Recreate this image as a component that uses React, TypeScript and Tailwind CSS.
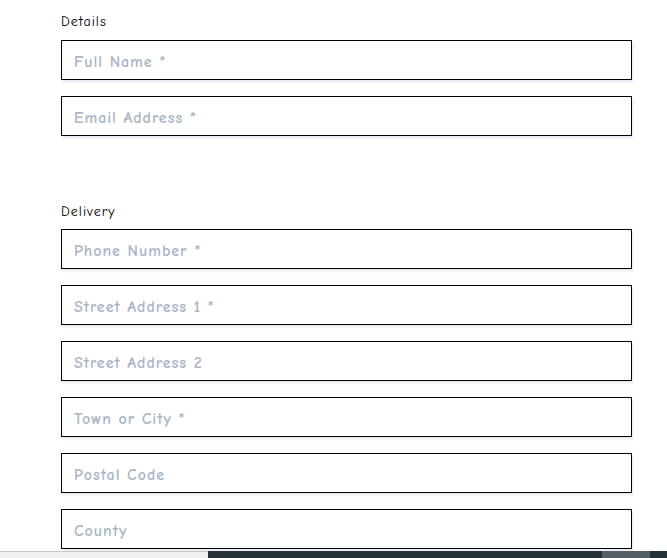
import React from "react";

const details = ["Full Name *", "Email Address *"];
const delivery = [
  "Phone Number *",
  "Street Address 1 *",
  "Street Address 2",
  "Town or City *",
  "Postal Code",
  "County",
];

const Field = ({ placeholder }: { placeholder: string }) => (
  <input
    type="text"
    placeholder={placeholder}
    className="block w-full h-10 border border-black bg-white pl-3 pr-3 pt-[3px] text-base font-bold tracking-[0.06em] text-gray-800 placeholder:text-[#a9b6c6] shadow-[1px_2px_2px_rgba(200,210,230,0.5)] focus:outline-none"
  />
);

const App = () => {
  return (
    <div
      className="min-h-screen bg-white overflow-hidden"
      style={{ fontFamily: '"Comic Sans MS", "Comic Neue", Lato, sans-serif' }}
    >
      <form className="w-[571px] ml-[61px] pt-[12px]">
        <fieldset>
          <legend className="text-sm leading-5 tracking-[1px] text-black mb-[8px]">Details</legend>
          <div className="flex flex-col gap-4">
            {details.map((p) => (
              <Field key={p} placeholder={p} />
            ))}
          </div>
        </fieldset>

        <fieldset className="mt-[66px]">
          <legend className="text-sm leading-5 tracking-[1px] text-black mb-[7px]">Delivery</legend>
          <div className="flex flex-col gap-4">
            {delivery.map((p) => (
              <Field key={p} placeholder={p} />
            ))}
          </div>
        </fieldset>
      </form>

      <div className="fixed bottom-0 left-0 right-0 h-[7px] flex">
        <div className="w-[208px] bg-[#f0f0f0] border-t border-[#c8c8c8]" />
        <div className="w-[394px] bg-[#263238]" />
        <div className="w-[48px] bg-[#555e62]" />
        <div className="flex-1 bg-[#263238]" />
      </div>
    </div>
  );
};

export default App;
